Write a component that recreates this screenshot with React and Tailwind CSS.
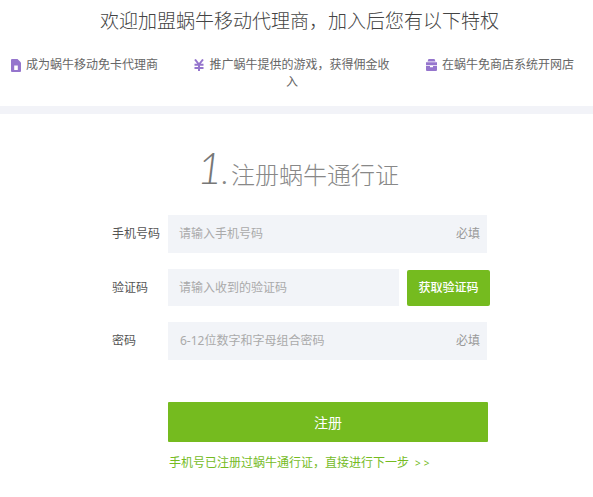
import React from 'react';

const cjk = 'font-["Noto_Sans","Noto_Sans_CJK_SC",sans-serif]';

function SimIcon() {
  return (
    <svg viewBox="0 0 10 13" className="inline-block w-[10px] h-[13px] align-[-3px] mr-[5px]">
      <path fill="#9575cd" d="M1 0h5.5L10 3.5V12a1 1 0 0 1-1 1H1a1 1 0 0 1-1-1V1a1 1 0 0 1 1-1z" />
      <path fill="#fff" d="M3.2 6.5h3.6v4.5H3.2z" />
    </svg>
  );
}

function YenIcon() {
  return (
    <svg viewBox="0 0 10 12" className="inline-block w-[10px] h-[12px] align-[-2px] mr-[5px]">
      <path fill="none" stroke="#9575cd" strokeWidth="2" d="M1 .5l4 5 4-5M5 5.5V12M.5 5.7h9M.5 8.9h9" />
    </svg>
  );
}

function ShopIcon() {
  return (
    <svg viewBox="0 0 11 12" className="inline-block w-[11px] h-[12px] align-[-2px] mr-[5px]">
      <path fill="#9575cd" d="M2.5 0h6l1 2.5h-8zM0 3.2h11v3H0zM0 7h4v1.2h3V7h4v4a1 1 0 0 1-1 1H1a1 1 0 0 1-1-1z" />
    </svg>
  );
}

function Field({ label, placeholder, required, children, inputWidth = 'w-[319px]', height = 'h-[38px]', pad = 'pl-[11px]' }) {
  return (
    <div className="flex items-center pl-[112px]">
      <div className="w-[56px] shrink-0 text-[12px] text-[#555]">{label}</div>
      <div className={`${inputWidth} ${height} ${pad} bg-[#f2f4f8] flex items-center justify-between pr-[7px] text-[12px]`}>
        <span className="text-[#aaa]">{placeholder}</span>
        {required && <span className="text-[#999]">必填</span>}
      </div>
      {children}
    </div>
  );
}

export default function App() {
  return (
    <div className={`w-[593px] h-[497px] bg-white overflow-hidden ${cjk}`}>
      <h1 className="h-[42px] pl-[6px] flex items-center justify-center text-[19px] font-light text-[#444]">
        欢迎加盟蜗牛移动代理商，加入后您有以下特权
      </h1>

      <div className="h-[64px] pt-[14px] pl-[11px] flex text-[12px] leading-[17px] text-[#666]">
        <div className="w-[147px] shrink-0 whitespace-nowrap"><SimIcon />成为蜗牛移动免卡代理商</div>
        <div className="w-[204px] shrink-0 ml-[32px] text-center"><YenIcon />推广蜗牛提供的游戏，获得佣金收入</div>
        <div className="ml-[32px] whitespace-nowrap"><ShopIcon />在蜗牛免商店系统开网店</div>
      </div>

      <div className="h-[8px] bg-[#f2f3f8]" />

      <div className="h-[101px] pl-[3px] pt-[31px] flex items-baseline justify-center text-[#888]">
        <span className='font-["Lato",sans-serif] font-light italic text-[44px] leading-none text-[#777]'>1</span>
        <span className='font-["Lato",sans-serif] font-normal text-[24px] leading-none -ml-[1px] mr-[4px]'>.</span>
        <span className="text-[24px] leading-none font-light">注册蜗牛通行证</span>
      </div>

      <div className="flex flex-col">
        <Field label="手机号码" placeholder="请输入手机号码" required />
        <div className="mt-[16px]">
          <Field label="验证码" placeholder="请输入收到的验证码" inputWidth="w-[231px]" height="h-[37px]">
            <button className="ml-[8px] w-[83px] h-[36px] rounded-[2px] bg-[#75bb1f] text-white text-[12px] font-medium">获取验证码</button>
          </Field>
        </div>
        <div className="mt-[16px]">
          <Field label="密码" placeholder="6-12位数字和字母组合密码" pad="pl-[12px]" required />
        </div>
      </div>

      <div className="pl-[168px] mt-[42px]">
        <button className="w-[320px] h-[40px] rounded-[1px] bg-[#75bb1f] text-white text-[14px]">注册</button>
        <p className="mt-[12px] text-[12px] leading-[17px] text-[#75bb1f] pl-[1px] whitespace-nowrap">
          手机号已注册过蜗牛通行证，直接进行下一步<span className="ml-[6px] text-[10px] tracking-[3px]">&gt;&gt;</span>
        </p>
      </div>
    </div>
  );
}
